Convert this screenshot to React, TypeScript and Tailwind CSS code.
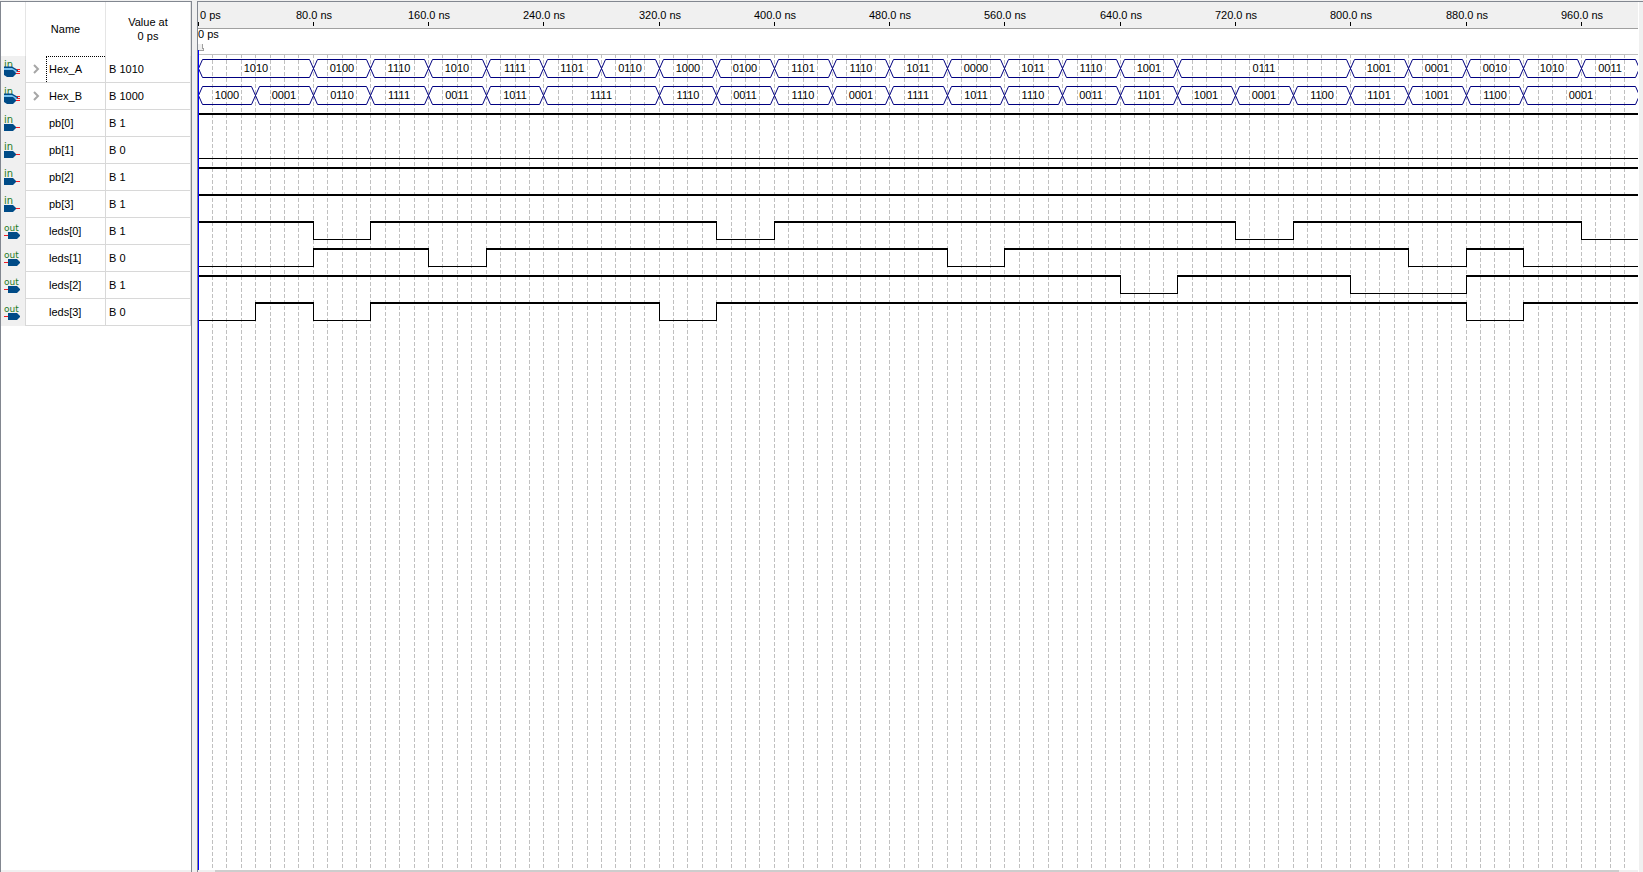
import React from 'react';

const PX_PER_NS = 1.441;
const ROW_HEIGHT = 27;
const PLOT_TOP = 2;
const END_NS = 1000;

type Segment = [start: number, value: string];

interface Signal {
  name: string;
  value: string;
  kind: 'bus' | 'in' | 'out';
  segments: Segment[];
}

const signals: Signal[] = [
  {
    name: 'Hex_A',
    value: 'B 1010',
    kind: 'bus',
    segments: [
      [0, '1010'], [80, '0100'], [120, '1110'], [160, '1010'], [200, '1111'], [240, '1101'],
      [280, '0110'], [320, '1000'], [360, '0100'], [400, '1101'], [440, '1110'], [480, '1011'],
      [520, '0000'], [560, '1011'], [600, '1110'], [640, '1001'], [680, '0111'], [800, '1001'],
      [840, '0001'], [880, '0010'], [920, '1010'], [960, '0011'],
    ],
  },
  {
    name: 'Hex_B',
    value: 'B 1000',
    kind: 'bus',
    segments: [
      [0, '1000'], [40, '0001'], [80, '0110'], [120, '1111'], [160, '0011'], [200, '1011'],
      [240, '1111'], [320, '1110'], [360, '0011'], [400, '1110'], [440, '0001'], [480, '1111'],
      [520, '1011'], [560, '1110'], [600, '0011'], [640, '1101'], [680, '1001'], [720, '0001'],
      [760, '1100'], [800, '1101'], [840, '1001'], [880, '1100'], [920, '0001'],
    ],
  },
  { name: 'pb[0]', value: 'B 1', kind: 'in', segments: [[0, '1']] },
  { name: 'pb[1]', value: 'B 0', kind: 'in', segments: [[0, '0']] },
  { name: 'pb[2]', value: 'B 1', kind: 'in', segments: [[0, '1']] },
  { name: 'pb[3]', value: 'B 1', kind: 'in', segments: [[0, '1']] },
  {
    name: 'leds[0]',
    value: 'B 1',
    kind: 'out',
    segments: [[0, '1'], [80, '0'], [120, '1'], [360, '0'], [400, '1'], [720, '0'], [760, '1'], [960, '0']],
  },
  {
    name: 'leds[1]',
    value: 'B 0',
    kind: 'out',
    segments: [[0, '0'], [80, '1'], [160, '0'], [200, '1'], [520, '0'], [560, '1'], [840, '0'], [880, '1'], [920, '0']],
  },
  {
    name: 'leds[2]',
    value: 'B 1',
    kind: 'out',
    segments: [[0, '1'], [640, '0'], [680, '1'], [800, '0'], [880, '1']],
  },
  {
    name: 'leds[3]',
    value: 'B 0',
    kind: 'out',
    segments: [[0, '0'], [40, '1'], [80, '0'], [120, '1'], [320, '0'], [360, '1'], [880, '0'], [920, '1']],
  },
];

const timeToX = (ns: number) => Math.floor(ns * PX_PER_NS);
const gridTimes = Array.from({ length: 99 }, (_, i) => (i + 1) * 10);
const rulerTimes = Array.from({ length: 13 }, (_, i) => i * 80);

function PinIcon({ kind }: { kind: Signal['kind'] }) {
  if (kind === 'bus') {
    return (
      <svg className="block" width="24" height="27" viewBox="1 0 24 27" aria-hidden="true">
        <text x="4" y="12" fontSize="10" fill="#1f7a1f" fontFamily="DejaVu Sans, sans-serif">in</text>
        <path d="M4 10.500H12L18 14V16H4Z" fill="#004b87" />
        <path d="M4 12H12L17 15L16 17L12 14H4Z" fill="#7cc4f0" />
        <path d="M4 14H13L16 17V18L13 21H7L4 19Z" fill="#004b87" />
        <path d="M17 13.5H20M17 15.5H20M16 17.5H20" stroke="#ed1c24" shapeRendering="crispEdges" />
      </svg>
    );
  }
  if (kind === 'in') {
    return (
      <svg className="block" width="24" height="27" viewBox="1 0 24 27" aria-hidden="true">
        <text x="4" y="13" fontSize="10" fill="#1f7a1f" fontFamily="DejaVu Sans, sans-serif">in</text>
        <path d="M4 14H13L16 17V18L13 21H4Z" fill="#004b87" />
        <path d="M16 17.5H20" stroke="#ed1c24" shapeRendering="crispEdges" />
      </svg>
    );
  }
  return (
    <svg className="block" width="24" height="27" viewBox="1 0 24 27" aria-hidden="true">
      <text x="4" y="13" fontSize="9" fill="#1f7a1f" fontFamily="DejaVu Sans, sans-serif">out</text>
      <path d="M8 14H17L20 17V18L17 21H8Z" fill="#004b87" />
      <path d="M4 17.5H8" stroke="#ed1c24" shapeRendering="crispEdges" />
    </svg>
  );
}

function SignalRow({ signal, focused }: { signal: Signal; focused: boolean }) {
  return (
    <tr className="h-[27px]">
      <td className="border-r border-[#d8d8d8] bg-[#f0f0f0] p-0">
        <PinIcon kind={signal.kind} />
      </td>
      <td className="border-r border-b border-[#d8d8d8] p-0">
        <div className="flex h-[26px]">
          <div className="flex w-5 shrink-0 items-center justify-center">
            {signal.kind === 'bus' && (
              <button type="button" aria-label={`Expand ${signal.name}`} className="block">
                <svg className="block" width="8" height="10" viewBox="0 0 8 10" fill="none" aria-hidden="true">
                  <path d="M2 1L6 5L2 9" stroke="#a6a6a6" strokeWidth="2" />
                </svg>
              </button>
            )}
          </div>
          <div
            className={
              focused
                ? 'flex flex-1 items-center border-t border-l border-dotted border-black pl-0.5'
                : 'flex flex-1 items-center pl-[3px]'
            }
          >
            {signal.name}
          </div>
        </div>
      </td>
      <td className="border-r border-b border-[#d8d8d8] py-0 pr-0 pl-[3px]">{signal.value}</td>
    </tr>
  );
}

function SignalTable() {
  return (
    <section className="flex w-48 shrink-0 flex-col border-x border-t border-[#828790] bg-white">
      <table className="w-full table-fixed border-separate border-spacing-0">
        <colgroup>
          <col className="w-[25px]" />
          <col className="w-20" />
          <col />
        </colgroup>
        <thead>
          <tr className="h-[54px]">
            <th className="border-r border-[#e5e5e5] p-0" aria-label="Type" />
            <th className="border-r border-[#e5e5e5] p-0 text-center font-normal">Name</th>
            <th className="border-r border-[#e5e5e5] p-0 text-center leading-[14px] font-normal">
              Value at
              <br />0 ps
            </th>
          </tr>
        </thead>
        <tbody>
          {signals.map((signal, i) => (
            <SignalRow key={signal.name} signal={signal} focused={i === 0} />
          ))}
        </tbody>
      </table>
      <div className="mt-auto h-0.5 bg-[#f0f0f0]" />
    </section>
  );
}

function Ruler() {
  return (
    <svg className="block h-[26px] w-full shrink-0 bg-[#f0f0f0]" fontSize="11" fill="#000">
      {rulerTimes.map((t) => (
        <g key={t}>
          <rect x={timeToX(t)} y="20" width="1" height="4" />
          <text x={t === 0 ? 2 : timeToX(t) + 1} y="17" textAnchor={t === 0 ? 'start' : 'middle'}>
            {t === 0 ? '0 ps' : `${t}.0 ns`}
          </text>
        </g>
      ))}
    </svg>
  );
}

function BusTrace({ segments, top }: { segments: Segment[]; top: number }) {
  const y1 = top + 3;
  const mid = top + 12;
  const y2 = top + 21;
  return (
    <g>
      {segments.map(([start, value], i) => {
        const end = i + 1 < segments.length ? segments[i + 1][0] : END_NS;
        const a = timeToX(start);
        const b = timeToX(end);
        return (
          <g key={start}>
            <path
              d={`M${a + 0.5} ${mid + 0.5}L${a + 4.5} ${y1 + 0.5}H${b - 3.5}L${b + 0.5} ${mid + 0.5}L${b - 3.5} ${y2 + 0.5}H${a + 4.5}Z`}
              fill="none"
              stroke="#000080"
            />
            <text x={Math.ceil((a + b) / 2)} y={mid + 4} textAnchor="middle" fill="#000">
              {value}
            </text>
          </g>
        );
      })}
    </g>
  );
}

function BitTrace({ segments, top }: { segments: Segment[]; top: number }) {
  return (
    <g fill="#000" shapeRendering="crispEdges">
      {segments.map(([start, value], i) => {
        const end = i + 1 < segments.length ? segments[i + 1][0] : END_NS;
        const a = timeToX(start);
        const b = timeToX(end);
        const high = value === '1';
        return (
          <g key={start}>
            <rect x={a} y={high ? top + 3 : top + 21} width={b - a} height={high ? 2 : 1} />
            {i > 0 && <rect x={a} y={top + 3} width="1" height="19" />}
          </g>
        );
      })}
    </g>
  );
}

function WavePlot() {
  return (
    <svg className="block min-h-0 w-full flex-1" fontSize="11">
      <g stroke="#c0c0c0" strokeDasharray="4 2" shapeRendering="crispEdges">
        {gridTimes.map((t) => (
          <line key={t} x1={timeToX(t) + 0.5} x2={timeToX(t) + 0.5} y1="0" y2="100%" />
        ))}
      </g>
      <rect x="0" y="0" width="100%" height="1" fill="#c0c0c0" />
      {signals.map((s, i) => {
        const top = PLOT_TOP + i * ROW_HEIGHT;
        return s.kind === 'bus' ? (
          <BusTrace key={s.name} segments={s.segments} top={top} />
        ) : (
          <BitTrace key={s.name} segments={s.segments} top={top} />
        );
      })}
      <rect x="0" y="0" width="1" height="100%" fill="#0000ff" />
    </svg>
  );
}

function CursorBar() {
  return (
    <div className="h-[26px] shrink-0 border-t border-[#a0a0a0]">
      <div className="h-[15px] leading-[11px]">0 ps</div>
      <svg className="block" width="6" height="10" shapeRendering="crispEdges" aria-hidden="true">
        <path d="M0 0H4V4H5V7H0Z" fill="#f0f0f0" />
        <path d="M4.500 0V4H5.500V6.500H1" fill="none" stroke="#a0a0a0" />
        <rect x="0" y="6" width="1" height="4" fill="#0000ff" />
      </svg>
    </div>
  );
}

export default function App() {
  return (
    <div className="flex h-screen bg-[#f0f0f0] pt-px font-['Liberation_Sans',Arial,sans-serif] text-[11px] text-black">
      <SignalTable />
      <section className="ml-[5px] flex min-w-0 flex-1 flex-col border-t border-l border-[#828790]">
        <div className="mr-1 flex min-h-0 flex-1 flex-col bg-white pr-px">
          <Ruler />
          <CursorBar />
          <WavePlot />
          <div className="flex h-0.5 shrink-0 bg-[#f0f0f0] pr-[19px] pl-[17px]">
            <div className="flex-1 bg-[#cdcdcd]" />
          </div>
        </div>
      </section>
    </div>
  );
}
